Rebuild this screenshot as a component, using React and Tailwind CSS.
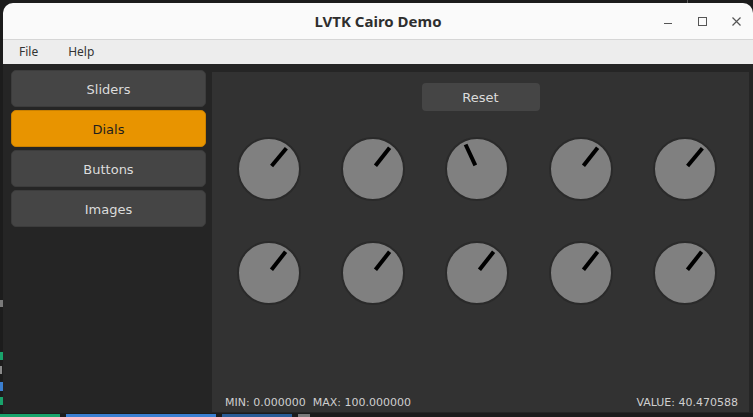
import React from "react";

function Knob({ angle }) {
  const r = (angle * Math.PI) / 180;
  const s = Math.sin(r);
  const c = Math.cos(r);
  return (
    <svg width="64" height="64" viewBox="0 0 64 64">
      <circle cx="32" cy="32" r="31" fill="#808080" stroke="#2a2a2a" strokeWidth="2" />
      <line
        x1={32 + 4 * s}
        y1={32 - 4 * c}
        x2={32 + 27 * s}
        y2={32 - 27 * c}
        stroke="#000"
        strokeWidth="4"
      />
    </svg>
  );
}

const angles = [40, 38, -25, 38, 40, 38, 38, 38, 38, 38];

function SideButton({ label, active }) {
  return (
    <div
      className={
        "h-[37px] pt-[2px] rounded-[5px] border flex items-center justify-center text-[13px] " +
        (active
          ? "bg-[#e89400] border-[#c98000] text-[#1e1e1e]"
          : "bg-[#454545] border-[#3c3c3c] text-[#dcdcdc]")
      }
    >
      {label}
    </div>
  );
}

export default function App() {
  return (
    <div className="w-[753px] h-[417px] overflow-hidden bg-[#1c1c1c] flex flex-col" style={{ fontFamily: '"DejaVu Sans", sans-serif' }}>
      <div className="h-[3px] shrink-0 relative">
        <div className="absolute left-[687px] top-0 w-px h-[3px] bg-[#5a5a5a]" />
      </div>
      <div className="flex h-[410px] shrink-0">
        <div className="w-[3px] shrink-0 relative">
          <div className="absolute top-[297px] left-0 w-[3px] h-[7px] bg-[#7a7a7a]" />
          <div className="absolute top-[349px] left-0 w-[3px] h-[8px] bg-[#19a36b]" />
          <div className="absolute top-[363px] left-0 w-[2px] h-[8px] bg-[#8a8a8a]" />
          <div className="absolute top-[379px] left-0 w-[3px] h-[9px] bg-[#3b7fd0]" />
          <div className="absolute top-[394px] left-0 w-[3px] h-[8px] bg-[#19a36b]" />
        </div>
        <div className="w-[750px] shrink-0 rounded-t-[10px] overflow-hidden flex flex-col bg-[#252525]">
          <div className="h-[37px] shrink-0 bg-[#fafafa] border-b border-[#d6d6d6] relative flex items-center justify-center">
            <span className="text-[15px] font-bold text-[#2e2e2e]" style={{ fontFamily: '"Noto Sans", sans-serif' }}>
              LVTK Cairo Demo
            </span>
            <div className="absolute right-0 top-0 h-full flex items-center">
              <div className="absolute left-[-89px] top-[20px] w-[8px] h-px bg-[#555]" />
              <div className="absolute left-[-55px] top-[14px] w-[9px] h-[9px] border border-[#555]" />
              <svg className="absolute left-[-21px] top-[14px]" width="9" height="9" viewBox="0 0 9 9">
                <path d="M0.5 0.5 L8.5 8.5 M8.5 0.5 L0.5 8.5" stroke="#555" strokeWidth="1.2" />
              </svg>
            </div>
          </div>
          <div className="h-[24px] shrink-0 bg-[#ededed] flex items-center text-[12px] text-[#333]" style={{ fontFamily: '"Noto Sans", sans-serif' }}>
            <span className="ml-[16px]">File</span>
            <span className="ml-[30px]">Help</span>
          </div>
          <div className="flex-1 flex">
            <div className="w-[209px] shrink-0 pl-[8px] pr-[6px] pt-[6px] flex flex-col gap-[3px]">
              <SideButton label="Sliders" />
              <SideButton label="Dials" active />
              <SideButton label="Buttons" />
              <SideButton label="Images" />
            </div>
            <div className="w-[537px] mt-[8px] mb-[1px] bg-[#323232] flex flex-col">
              <div className="flex justify-center pt-[11px]">
                <div className="w-[118px] h-[28px] pt-[2px] rounded-[4px] bg-[#454545] flex items-center justify-center text-[13px] text-[#dcdcdc]">
                  Reset
                </div>
              </div>
              <div className="mt-[26px] pl-[5px] grid grid-cols-[repeat(5,104px)] gap-y-[40px]">
                {angles.map((a, i) => (
                  <div key={i} className="h-[64px] flex justify-center">
                    <Knob angle={a} />
                  </div>
                ))}
              </div>
              <div className="mt-auto pl-[13px] pr-[11px] pb-[2px] flex justify-between text-[11px] leading-[14px] text-[#cfcfcf]">
                <span className="whitespace-pre">MIN: 0.000000  MAX: 100.000000</span>
                <span>VALUE: 40.470588</span>
              </div>
            </div>
          </div>
        </div>
      </div>
      <div className="h-[4px] shrink-0 flex items-start gap-[6px] pt-[1px]">
        <div className="w-[60px] h-[3px] bg-[#19a36b]" />
        <div className="w-[150px] h-[3px] bg-[#3b7fd0]" />
        <div className="w-[70px] h-[3px] bg-[#2a5c96]" />
        <div className="w-[12px] h-[3px] bg-[#7a7a7a]" />
      </div>
    </div>
  );
}
